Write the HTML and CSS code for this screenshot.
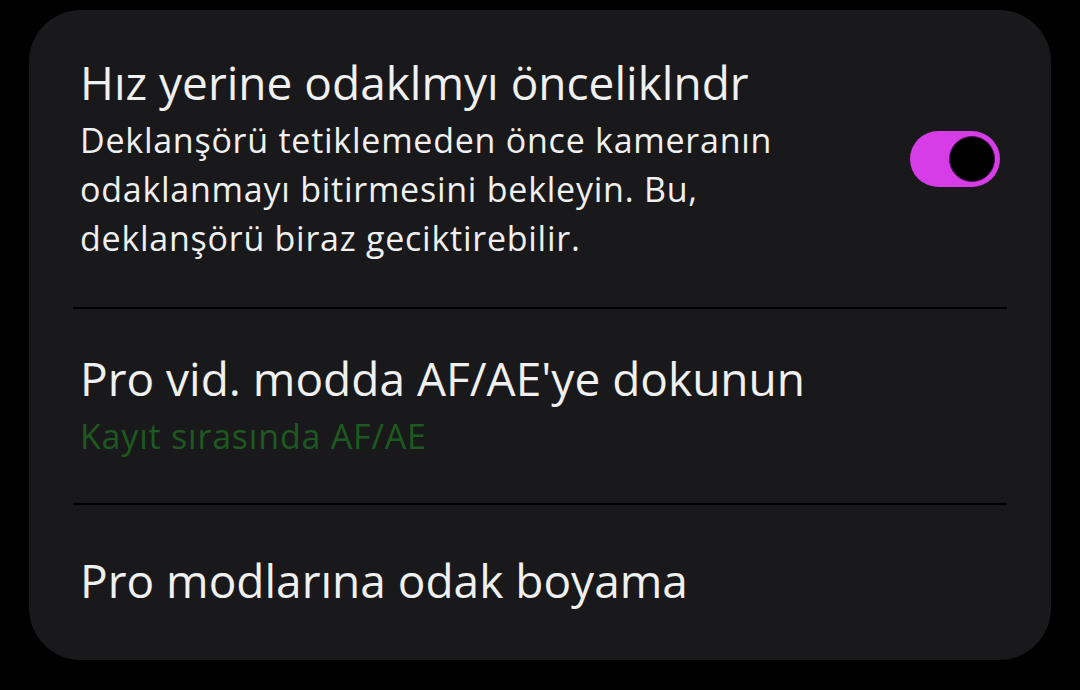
FILE: index.html
```html
<!DOCTYPE html>
<html lang="tr">
<head>
    <meta charset="UTF-8">
    <meta name="viewport" content="width=device-width, initial-scale=1.0">
    <title>Kamera ayarları</title>
    <link rel="stylesheet" href="styles.css">
</head>
<body>

    <div class="card">
        <div class="item item-first">
            <div class="item-text">
                <div class="item-title">Hız yerine odaklmyı önceliklndr</div>
                <div class="item-desc">Deklanşörü tetiklemeden önce kameranın odaklanmayı bitirmesini bekleyin. Bu, deklanşörü biraz geciktirebilir.</div>
            </div>
            <div class="switch on"><span class="knob"></span></div>
        </div>

        <div class="divider"></div>

        <div class="item item-second">
            <div class="item-text">
                <div class="item-title">Pro vid. modda AF/AE'ye dokunun</div>
                <div class="item-sub">Kayıt sırasında AF/AE</div>
            </div>
        </div>

        <div class="divider"></div>

        <div class="item item-last">
            <div class="item-text">
                <div class="item-title">Pro modlarına odak boyama</div>
            </div>
        </div>
    </div>

</body>
</html>
```

FILE: styles.css
```css
body {
    margin: 0;
    padding: 10px 29px 30px 29px;
    background-color: #000;
    font-family: "Open Sans", Roboto, sans-serif;
    color: #f0f0f0;
}

.card {
    width: 1022px;
    height: 650px;
    background-color: #19191b;
    border-radius: 52px;
    box-sizing: border-box;
    padding: 0 44px;
}

.item {
    display: flex;
    align-items: center;
    padding: 0 7px;
}

.item-first {
    height: 297px;
}

.item-second {
    height: 194px;
}

.item-last {
    height: 153px;
    padding-bottom: 4px;
    box-sizing: border-box;
}

.item-text {
    flex: 1;
}

.item-title {
    font-size: 46px;
    line-height: 54px;
}

.item-desc {
    font-size: 34px;
    line-height: 49px;
    letter-spacing: 0.75px;
    margin-top: 7px;
    max-width: 790px;
}

.item-sub {
    font-size: 34px;
    line-height: 49px;
    letter-spacing: 0.8px;
    margin-top: 7px;
    color: #1d5a20;
}

.divider {
    height: 2px;
    background-color: #000;
}

.switch {
    width: 90px;
    height: 56px;
    border-radius: 28px;
    background-color: #d63de6;
    position: relative;
}

.switch .knob {
    position: absolute;
    top: 5px;
    right: 5px;
    width: 44px;
    height: 44px;
    border-radius: 50%;
    background-color: #000;
    border: 1px solid #4a0c55;
}
```
